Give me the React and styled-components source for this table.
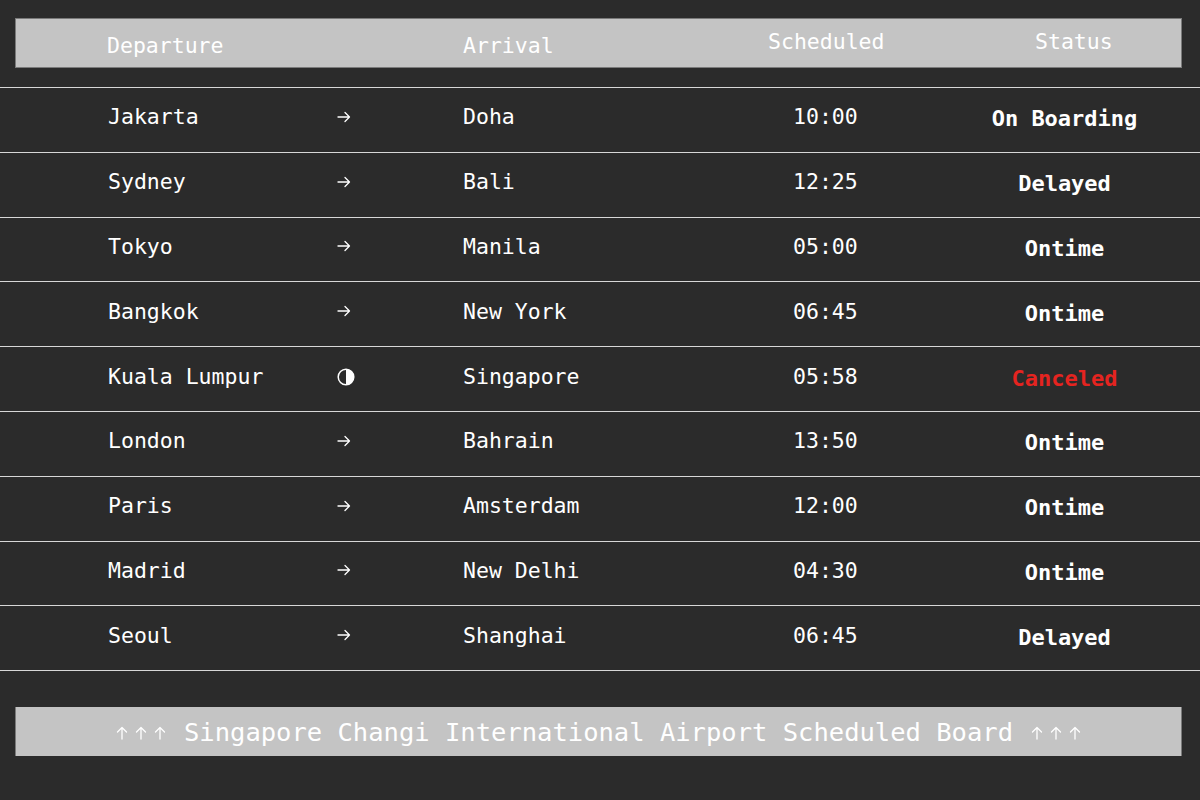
import React from "react";
import styled, { createGlobalStyle } from "styled-components";

const GlobalStyle = createGlobalStyle`
  html, body {
    margin: 0;
    padding: 0;
    background: #2b2b2b;
    overflow: hidden;
  }
  body {
    font-family: "DejaVu Sans Mono", "Liberation Mono", monospace;
    color: #ffffff;
  }
`;

const Page = styled.div`
  width: 1200px;
  height: 800px;
  display: flex;
  flex-direction: column;
  padding-top: 18px;
  box-sizing: border-box;
`;

const HeaderBar = styled.div`
  margin: 0 18px 0 15px;
  height: 50px;
  box-sizing: border-box;
  background: #c4c4c4;
  border: 1px solid #7a7a7a;
  display: grid;
  grid-template-columns: 356px 305px 267px 1fr;
  padding-left: 91px;
  align-items: center;
`;

const HeaderCell = styled.div`
  font-size: 21.5px;
  color: #ffffff;
  padding-top: ${(p) => (p.$raised ? "0" : "4px")};
  padding-bottom: ${(p) => (p.$raised ? "4px" : "0")};
  white-space: nowrap;
`;

const Rows = styled.div`
  margin-top: 19px;
  display: flex;
  flex-direction: column;
  border-bottom: 1px solid #d8d8d8;
`;

const Row = styled.div`
  height: 64.8px;
  box-sizing: border-box;
  border-top: 1px solid #d8d8d8;
  display: grid;
  grid-template-columns: 229px 126px 330px 136px 1fr;
  padding-left: 108px;
  align-items: center;
`;

const Cell = styled.div`
  font-size: 21.5px;
  color: #ffffff;
  white-space: nowrap;
  padding-bottom: 6px;
`;

const IconCell = styled.div`
  display: flex;
  align-items: center;
  padding-bottom: ${(p) => (p.$big ? "5px" : "6px")};
`;

const Status = styled.div`
  font-size: 22px;
  font-weight: bold;
  text-align: center;
  color: ${(p) => (p.$cancel ? "#e52420" : "#ffffff")};
  padding-bottom: 2px;
  white-space: nowrap;
`;

const Footer = styled.div`
  margin: 36px 18px 0 15px;
  height: 49px;
  box-sizing: border-box;
  background: #c4c4c4;
  border-left: 1px solid #7a7a7a;
  border-right: 1px solid #7a7a7a;
  display: flex;
  align-items: center;
  justify-content: center;
  font-size: 25.5px;
  color: #ffffff;
  white-space: pre;
`;

const UpGroup = styled.span`
  display: inline-flex;
  align-items: center;
  gap: 7px;
  margin: ${(p) => (p.$right ? "0 0 0 18px" : "0 18px 0 0")};
  padding-top: 2px;
`;

const RightArrow = () => (
  <svg width="14" height="12" viewBox="0 0 14 12" fill="none" stroke="#fff" strokeWidth="1.3" strokeLinecap="round" strokeLinejoin="round">
    <path d="M1 6H12.5M8 1.5L12.5 6L8 10.5" />
  </svg>
);

const HalfCircle = () => (
  <svg width="18" height="18" viewBox="0 0 18 18">
    <circle cx="9" cy="9" r="7.8" fill="none" stroke="#fff" strokeWidth="1.5" />
    <path d="M9 1.2A7.8 7.8 0 0 1 9 16.8Z" fill="#fff" />
  </svg>
);

const UpArrow = () => (
  <svg width="12" height="14" viewBox="0 0 12 14" fill="none" stroke="#fff" strokeWidth="1.3" strokeLinecap="round" strokeLinejoin="round">
    <path d="M6 13V1.5M1.5 6L6 1.5L10.5 6" />
  </svg>
);

const UpArrows = ({ right }) => (
  <UpGroup $right={right}>
    <UpArrow />
    <UpArrow />
    <UpArrow />
  </UpGroup>
);

const flights = [
  { from: "Jakarta", to: "Doha", time: "10:00", status: "On Boarding" },
  { from: "Sydney", to: "Bali", time: "12:25", status: "Delayed" },
  { from: "Tokyo", to: "Manila", time: "05:00", status: "Ontime" },
  { from: "Bangkok", to: "New York", time: "06:45", status: "Ontime" },
  { from: "Kuala Lumpur", to: "Singapore", time: "05:58", status: "Canceled", cancel: true },
  { from: "London", to: "Bahrain", time: "13:50", status: "Ontime" },
  { from: "Paris", to: "Amsterdam", time: "12:00", status: "Ontime" },
  { from: "Madrid", to: "New Delhi", time: "04:30", status: "Ontime" },
  { from: "Seoul", to: "Shanghai", time: "06:45", status: "Delayed" },
];

export default function App() {
  return (
    <>
      <GlobalStyle />
      <Page>
        <HeaderBar>
          <HeaderCell>Departure</HeaderCell>
          <HeaderCell>Arrival</HeaderCell>
          <HeaderCell $raised>Scheduled</HeaderCell>
          <HeaderCell $raised>Status</HeaderCell>
        </HeaderBar>
        <Rows>
          {flights.map((f) => (
            <Row key={f.from}>
              <Cell>{f.from}</Cell>
              <IconCell $big={f.cancel}>{f.cancel ? <HalfCircle /> : <RightArrow />}</IconCell>
              <Cell>{f.to}</Cell>
              <Cell>{f.time}</Cell>
              <Status $cancel={f.cancel}>{f.status}</Status>
            </Row>
          ))}
        </Rows>
        <Footer>
          <UpArrows />
          Singapore Changi International Airport Scheduled Board
          <UpArrows right />
        </Footer>
      </Page>
    </>
  );
}
